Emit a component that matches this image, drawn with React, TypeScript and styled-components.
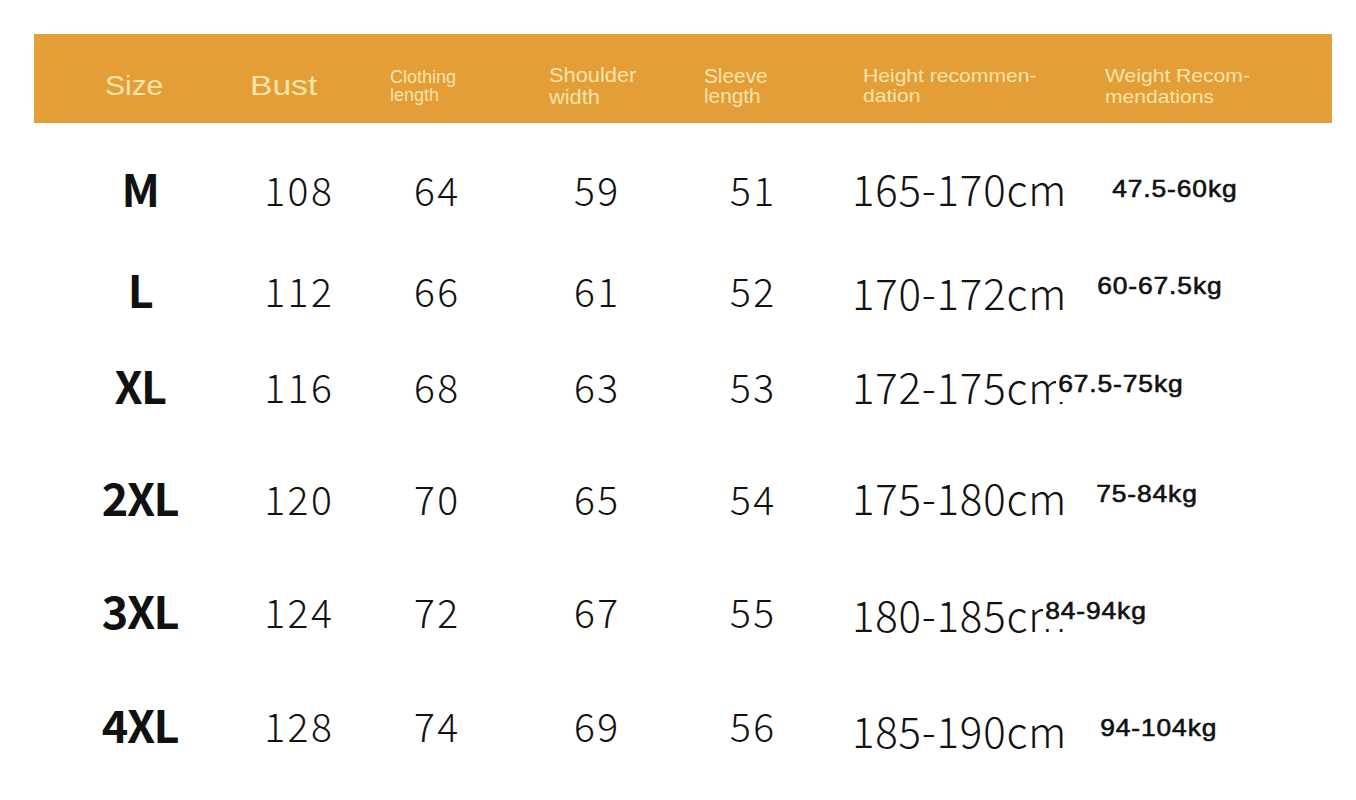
import React from "react";
import styled, { createGlobalStyle } from "styled-components";

const Global = createGlobalStyle`
  html, body { margin: 0; padding: 0; background: #ffffff; }
  body { font-family: "Liberation Sans", Arial, sans-serif; }
`;

const Page = styled.div`
  width: 1356px;
  height: 800px;
  box-sizing: border-box;
  padding: 34px 24px 0 34px;
  background: #ffffff;
  overflow: hidden;
`;

const HeaderBar = styled.div`
  width: 1298px;
  height: 89px;
  box-sizing: border-box;
  padding: 14px 0 0 71px;
  background: #e39e38;
  display: grid;
  grid-template-columns: 145px 140px 159px 155px 159px 242px 1fr;
  align-items: center;
`;

const HeaderCell = styled.div<{ $size: number; $lh: number; $sx: number }>`
  font-family: "Liberation Sans", Arial, sans-serif;
  font-size: ${(p) => p.$size}px;
  line-height: ${(p) => p.$lh}px;
  color: #f8e4a8;
  white-space: nowrap;
  transform-origin: left center;
  transform: scaleX(${(p) => p.$sx});
`;

const Body = styled.div`
  display: flex;
  flex-direction: column;
  padding: 15px 0 0 36px;
`;

const Row = styled.div<{ $h: number }>`
  height: ${(p) => p.$h}px;
  display: grid;
  grid-template-columns: 140px 176px 100px 220px 92px 272px 1fr;
  align-items: center;
  color: #111111;
`;

const SizeLabel = styled.div<{ $dy: number }>`
  font-family: "Noto Sans CJK KR", "Noto Sans", sans-serif;
  font-weight: 700;
  font-size: 45px;
  line-height: 1;
  letter-spacing: -1.5px;
  text-align: center;
  transform: translateY(${(p) => p.$dy}px);
`;

const Num = styled.div`
  font-family: "Noto Sans CJK KR", "Noto Sans", sans-serif;
  font-weight: 300;
  font-size: 39px;
  line-height: 1;
  letter-spacing: 2.5px;
  padding-left: 2.5px;
  text-align: center;
  transform: translateY(-3px);
`;

const Height = styled.div<{ $dy: number }>`
  font-family: "Noto Sans CJK KR", "Noto Sans", sans-serif;
  font-weight: 300;
  font-size: 42px;
  line-height: 1;
  letter-spacing: 0.8px;
  padding-left: 54px;
  white-space: nowrap;
  transform: translateY(${(p) => p.$dy - 3}px);
`;

const WeightCell = styled.div`
  display: flex;
  align-items: center;
`;

const Weight = styled.span<{ $dx: number; $dy: number }>`
  position: relative;
  z-index: 1;
  display: inline-block;
  margin-left: ${(p) => p.$dx - 2}px;
  padding-left: 2px;
  background: #ffffff;
  font-family: "Liberation Sans", Arial, sans-serif;
  font-weight: 400;
  font-size: 24px;
  line-height: 36px;
  letter-spacing: 0.8px;
  -webkit-text-stroke: 0.6px #111111;
  white-space: nowrap;
  transform-origin: left center;
  transform: translateY(${(p) => p.$dy}px) scaleX(1.1);
`;

const header = [
  { lines: ["Size"], size: 28, lh: 28, sx: 1.07 },
  { lines: ["Bust"], size: 28, lh: 28, sx: 1.2 },
  { lines: ["Clothing", "length"], size: 18, lh: 18, sx: 1.0 },
  { lines: ["Shoulder", "width"], size: 20, lh: 22, sx: 1.09 },
  { lines: ["Sleeve", "length"], size: 20, lh: 20, sx: 1.04 },
  { lines: ["Height recommen-", "dation"], size: 19, lh: 20, sx: 1.11 },
  { lines: ["Weight Recom-", "mendations"], size: 19, lh: 21, sx: 1.11 },
];

const rows = [
  { size: "M", h: 108, v: ["108", "64", "59", "51"], height: "165-170cm", weight: "47.5-60kg", hdy: -1, wdx: 42, wdy: -3 },
  { size: "L", h: 94, v: ["112", "66", "61", "52"], height: "170-172cm", weight: "60-67.5kg", hdy: 2, wdx: 27, wdy: -7 },
  { size: "XL", h: 98, v: ["116", "68", "63", "53"], height: "172-175cm", weight: "67.5-75kg", hdy: 0, wdx: -12, wdy: -5 },
  { size: "2XL", h: 126, v: ["120", "70", "65", "54"], height: "175-180cm", weight: "75-84kg", hdy: -1, wdx: 26, wdy: -7 },
  { size: "3XL", h: 100, v: ["124", "72", "67", "55"], height: "180-185cm", weight: "84-94kg", hdy: 3, wdx: -25, wdy: -3 },
  { size: "4XL", h: 128, v: ["128", "74", "69", "56"], height: "185-190cm", weight: "94-104kg", hdy: 5, wdx: 30, wdy: 0 },
];

export default function App() {
  return (
    <>
      <Global />
      <Page>
        <HeaderBar>
          {header.map((h) => (
            <HeaderCell key={h.lines[0]} $size={h.size} $lh={h.lh} $sx={h.sx}>
              {h.lines.map((l, i) => (
                <React.Fragment key={l}>
                  {i > 0 && <br />}
                  {l}
                </React.Fragment>
              ))}
            </HeaderCell>
          ))}
        </HeaderBar>
        <Body>
          {rows.map((r) => (
            <Row key={r.size} $h={r.h}>
              <SizeLabel $dy={-5}>{r.size}</SizeLabel>
              {r.v.map((n, i) => (
                <Num key={i}>{n}</Num>
              ))}
              <Height $dy={r.hdy}>{r.height}</Height>
              <WeightCell>
                <Weight $dx={r.wdx} $dy={r.wdy}>
                  {r.weight}
                </Weight>
              </WeightCell>
            </Row>
          ))}
        </Body>
      </Page>
    </>
  );
}
